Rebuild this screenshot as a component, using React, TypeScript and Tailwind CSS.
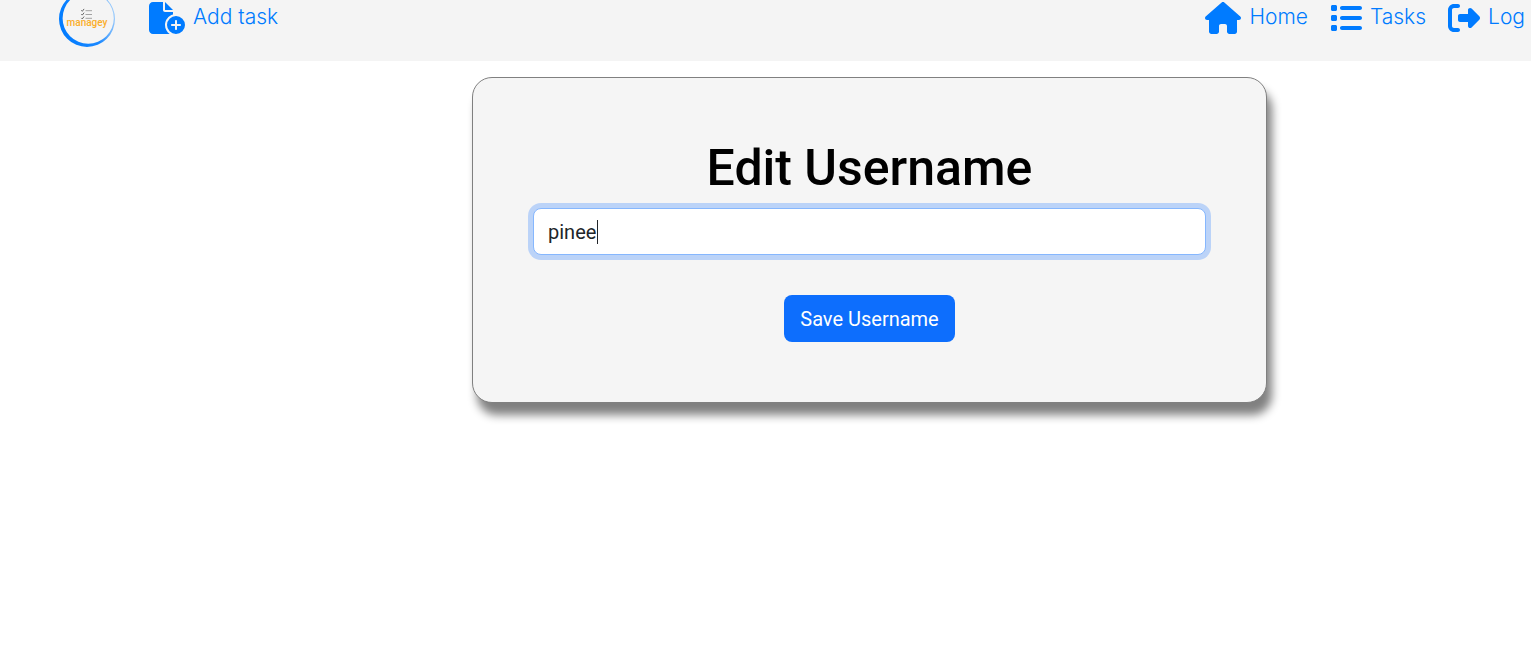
import { useState } from "react";
import type { ReactNode } from "react";
import { FaFileCirclePlus, FaHouse, FaList, FaRightFromBracket } from "react-icons/fa6";

function Logo() {
  return (
    <svg viewBox="0 0 56 56" className="-mt-[9px] h-14 w-14" role="img" aria-label="managey">
      <defs>
        <linearGradient id="ring" x1="0" y1="0.6" x2="1" y2="0.35">
          <stop offset="0" stopColor="#007bff" />
          <stop offset="0.6" stopColor="#1a88ff" />
          <stop offset="1" stopColor="#a5d0fb" />
        </linearGradient>
      </defs>
      <path
        fillRule="evenodd"
        fill="url(#ring)"
        d="M28 0a28 28 0 1 0 0 56a28 28 0 1 0 0-56ZM29.2 1.6a25.6 25.6 0 1 1 0 51.2a25.6 25.6 0 1 1 0-51.2Z"
      />
      <g fill="none" stroke="#555" strokeWidth="0.9">
        <path d="m22.3 19.3 1 1 1.8-2.4M22.3 23.1l1 1 1.8-2.4M22.3 26.9l1 1 1.8-2.4" />
        <path stroke="#999" d="M26.5 19.7h6.5M26.5 23.5h6.5M26.5 27.3h6.5" />
      </g>
      <text
        x="28"
        y="35"
        textAnchor="middle"
        className="fill-[#fbae2a] font-['Roboto',sans-serif] text-[10px] font-medium"
      >
        managey
      </text>
    </svg>
  );
}

function NavLink({ icon, label }: { icon: ReactNode; label: string }) {
  return (
    <a href="#" className="flex items-center gap-2 whitespace-nowrap text-[#007bff]">
      {icon}
      <span className="-mt-[2px] font-['Inter',sans-serif] text-[21px] leading-8 font-light">{label}</span>
    </a>
  );
}

export default function App() {
  const [username, setUsername] = useState("pinee");
  return (
    <div className="min-h-screen bg-white font-['Roboto',sans-serif]">
      <header className="flex h-[61px] items-start justify-between overflow-hidden bg-[#f4f4f4] pr-1.5 pl-[59px]">
        <div className="flex items-start gap-[34px]">
          <Logo />
          <div className="pt-[2px]">
            <NavLink icon={<FaFileCirclePlus className="h-8 w-9" />} label="Add task" />
          </div>
        </div>
        <nav className="flex gap-[22px] pt-[2px]">
          <NavLink icon={<FaHouse className="h-8 w-9" />} label="Home" />
          <NavLink icon={<FaList className="size-8" />} label="Tasks" />
          <NavLink icon={<FaRightFromBracket className="size-8" />} label="Log" />
        </nav>
      </header>

      <main className="grid grid-cols-[472fr_795fr_264fr] pt-4">
        <form
          className="col-start-2 flex flex-col items-center rounded-[20px] border border-[#808080] bg-[#f5f5f5] px-[60px] py-[60px] shadow-[5px_12px_10px_#808080]"
          onSubmit={(e) => e.preventDefault()}
        >
          <h1 className="text-[50px] leading-[60px] font-medium text-black">
            <label htmlFor="username">Edit Username</label>
          </h1>
          <div className="relative mt-[10px] w-full">
            <input
              id="username"
              type="text"
              value={username}
              onChange={(e) => setUsername(e.target.value)}
              className="h-[47px] w-full rounded-lg border border-[#86b7fe] bg-white px-[14px] text-[20px] text-[#212529] caret-transparent ring-[5px] ring-[#bbd3f8] outline-none"
            />
            <span className="absolute top-3 left-16 h-6 w-px bg-[#212529]" />
          </div>
          <button
            type="submit"
            className="mt-10 h-[47px] rounded-lg bg-[#0d6efd] px-4 text-[20px] text-white"
          >
            Save Username
          </button>
        </form>
      </main>
    </div>
  );
}
